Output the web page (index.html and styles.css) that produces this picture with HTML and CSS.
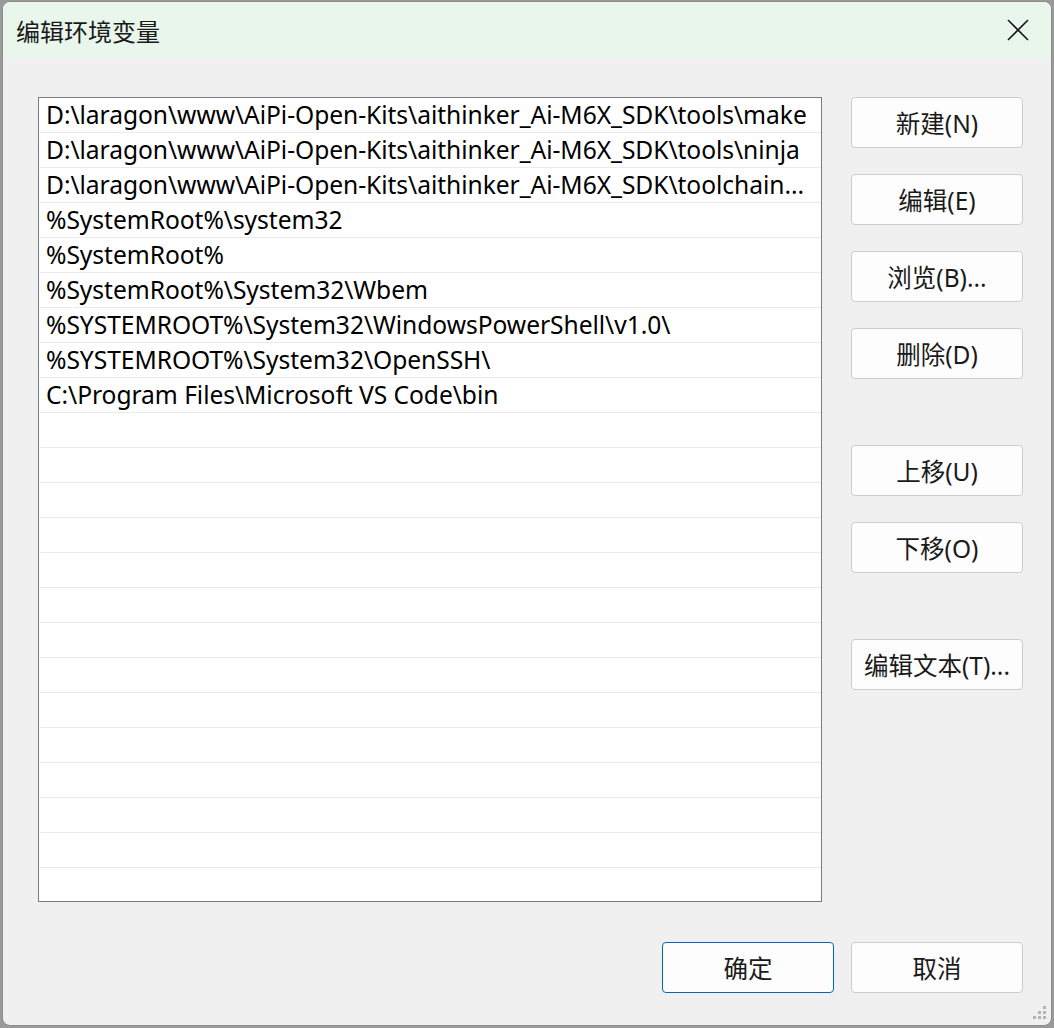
FILE: index.html
```html
<!DOCTYPE html>
<html lang="zh-CN">
<head>
    <meta charset="UTF-8">
    <title>编辑环境变量</title>
    <link rel="stylesheet" href="styles.css">
</head>
<body>

<div class="window">
    <!-- Barre de titre -->
    <div class="titlebar">
        <span class="title">编辑环境变量</span>
        <svg class="close" width="22" height="22" viewBox="0 0 22 22">
            <path d="M1 1 L21 21 M21 1 L1 21" stroke="#1a1a1a" stroke-width="1.6" fill="none"/>
        </svg>
    </div>

    <div class="content">
        <div class="listbox" id="pathList">
            <!-- Les lignes sont générées par JavaScript -->
        </div>

        <div class="side-buttons">
            <button class="btn">新建(N)</button>
            <button class="btn">编辑(E)</button>
            <button class="btn">浏览(B)...</button>
            <button class="btn">删除(D)</button>
            <button class="btn gap-top">上移(U)</button>
            <button class="btn">下移(O)</button>
            <button class="btn gap-top">编辑文本(T)...</button>
        </div>
    </div>

    <div class="footer">
        <button class="btn default">确定</button>
        <button class="btn">取消</button>
    </div>

    <svg class="grip" width="16" height="16" viewBox="0 0 16 16">
        <rect x="11" y="1" width="3" height="3" fill="#b5b5b5"/>
        <rect x="6" y="6" width="3" height="3" fill="#b5b5b5"/>
        <rect x="11" y="6" width="3" height="3" fill="#b5b5b5"/>
        <rect x="1" y="11" width="3" height="3" fill="#b5b5b5"/>
        <rect x="6" y="11" width="3" height="3" fill="#b5b5b5"/>
        <rect x="11" y="11" width="3" height="3" fill="#b5b5b5"/>
    </svg>
</div>

<script>
    // Entrées de la variable Path (la troisième est déjà tronquée comme à l'écran)
    const paths = [
        "D:\\laragon\\www\\AiPi-Open-Kits\\aithinker_Ai-M6X_SDK\\tools\\make",
        "D:\\laragon\\www\\AiPi-Open-Kits\\aithinker_Ai-M6X_SDK\\tools\\ninja",
        "D:\\laragon\\www\\AiPi-Open-Kits\\aithinker_Ai-M6X_SDK\\toolchain...",
        "%SystemRoot%\\system32",
        "%SystemRoot%",
        "%SystemRoot%\\System32\\Wbem",
        "%SYSTEMROOT%\\System32\\WindowsPowerShell\\v1.0\\",
        "%SYSTEMROOT%\\System32\\OpenSSH\\",
        "C:\\Program Files\\Microsoft VS Code\\bin"
    ];
    const totalRows = 23;

    const list = document.getElementById("pathList");
    for (let i = 0; i < totalRows; i++) {
        const row = document.createElement("div");
        row.className = "row";
        row.textContent = paths[i] || "";
        list.appendChild(row);
    }
</script>

</body>
</html>
```

FILE: styles.css
```css
body {
    margin: 0;
    background-color: #9a9a9a;
    font-family: "Noto Sans", "Noto Sans CJK SC", sans-serif;
    color: #000;
    overflow: hidden;
}

.window {
    position: relative;
    margin: 1px 0 0 2px;
    width: 1050px;
    height: 1025px;
    border: 1px solid #8c8c8c;
    border-radius: 8px;
    background-color: #f0f0f0;
    overflow: hidden;
    box-sizing: border-box;
    display: flex;
    flex-direction: column;
}

.titlebar {
    height: 56px;
    background-color: #e9f6ec;
    display: flex;
    align-items: center;
    justify-content: space-between;
    padding: 0 22px 0 13px;
    flex-shrink: 0;
}

.title {
    font-size: 24px;
    color: #1a1a1a;
}

.close {
    display: block;
}

.content {
    display: flex;
    gap: 29px;
    padding: 39px 0 0 35px;
}

.listbox {
    width: 782px;
    height: 803px;
    border: 1px solid #7a7a85;
    background-color: #fff;
    overflow: hidden;
    flex-shrink: 0;
}

.row {
    height: 34px;
    line-height: 34px;
    margin-left: 1px;
    padding-left: 6px;
    border-bottom: 1px solid #ebebeb;
    font-size: 24.6px;
    letter-spacing: -0.05px;
    white-space: nowrap;
}

.side-buttons {
    display: flex;
    flex-direction: column;
    gap: 26px;
}

.btn {
    width: 172px;
    height: 51px;
    border: 1px solid #cccccc;
    border-radius: 4px;
    background-color: #fdfdfd;
    font-family: "Noto Sans", "Noto Sans CJK SC", sans-serif;
    font-size: 24.5px;
    color: #1a1a1a;
    padding: 0;
}

.gap-top {
    margin-top: 40px;
}

.footer {
    display: flex;
    justify-content: flex-end;
    gap: 17px;
    padding: 40px 28px 0 0;
}

.btn.default {
    border-color: #0067c0;
}

.grip {
    position: absolute;
    right: 3px;
    bottom: 4px;
}
```
